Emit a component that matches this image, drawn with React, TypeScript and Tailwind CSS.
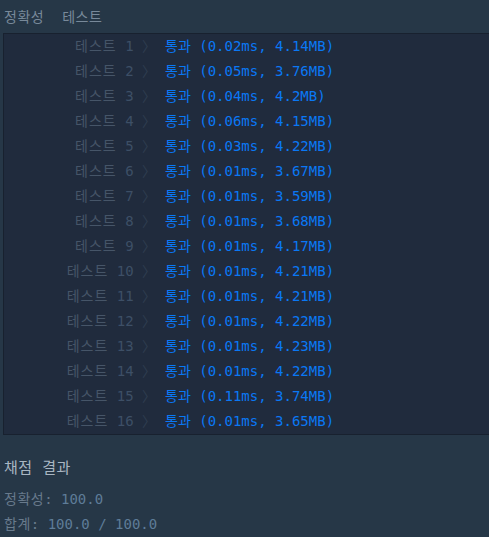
import React from "react";

const rows: [number, string, string][] = [
  [1, "0.02ms", "4.14MB"],
  [2, "0.05ms", "3.76MB"],
  [3, "0.04ms", "4.2MB"],
  [4, "0.06ms", "4.15MB"],
  [5, "0.03ms", "4.22MB"],
  [6, "0.01ms", "3.67MB"],
  [7, "0.01ms", "3.59MB"],
  [8, "0.01ms", "3.68MB"],
  [9, "0.01ms", "4.17MB"],
  [10, "0.01ms", "4.21MB"],
  [11, "0.01ms", "4.21MB"],
  [12, "0.01ms", "4.22MB"],
  [13, "0.01ms", "4.23MB"],
  [14, "0.01ms", "4.22MB"],
  [15, "0.11ms", "3.74MB"],
  [16, "0.01ms", "3.65MB"],
];

const mono = {
  fontFamily: '"DejaVu Sans Mono", "Noto Sans CJK KR", monospace',
};

export default function App() {
  return (
    <div
      className="w-[489px] h-[537px] bg-[#263747] overflow-hidden text-[14px]"
      style={mono}
    >
      <div className="h-[33px] flex items-center pl-[4px] gap-[18px] text-[#78899a] leading-none pt-[1px]">
        <span className="tracking-[0.5px]">정확성</span>
        <span className="tracking-[0.5px]">테스트</span>
      </div>
      <div className="ml-[3px] w-[490px] bg-[#202b3d] border border-[#18212f] border-r-0">
        {rows.map(([n, t, m]) => (
          <div key={n} className="flex h-[25px] items-center leading-[25px]">
            <div className="w-[152px] text-right whitespace-pre">
              <span className="text-[#465568] tracking-[1px]">테스트</span>
              <span className="text-[#465568]"> </span>
              <span className="text-[#3d4f66]">{n}</span>
              <span className="text-[#2f3d50]"> 〉</span>
            </div>
            <div className="pl-[9px] text-[#0a78f5] whitespace-pre">
              통과 ({t}, {m})
            </div>
          </div>
        ))}
      </div>
      <div className="pl-[4px] pt-[23px]">
        <div className="text-[15px] text-[#a9b6c3] h-[20px] leading-[20px] tracking-[0.5px]">채점 결과</div>
        <div className="mt-[9px] h-[25px] leading-[25px] text-[#687a8c]">
          <span className="tracking-[0.5px]">정확성</span>: <span className="text-[#5e7c98]">100.0</span>
        </div>
        <div className="h-[25px] leading-[25px] text-[#687a8c]">
          <span className="tracking-[0.5px]">합계</span>: <span className="text-[#5e7c98]">100.0 / 100.0</span>
        </div>
      </div>
    </div>
  );
}
